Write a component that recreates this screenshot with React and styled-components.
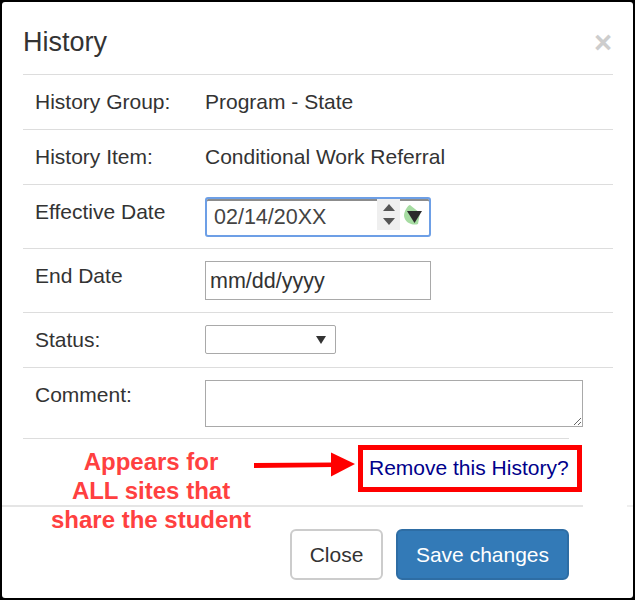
import React from "react";
import styled, { createGlobalStyle } from "styled-components";

const GlobalStyle = createGlobalStyle`
  html, body {
    margin: 0;
    padding: 0;
    background: #000;
  }
  body {
    font-family: "Liberation Sans", Arial, sans-serif;
    color: #333;
  }
`;

const Frame = styled.div`
  box-sizing: border-box;
  width: 635px;
  height: 600px;
  padding: 2px;
  background: #000;
`;

const Sheet = styled.div`
  height: 596px;
  background: #fff;
  border-radius: 3px;
  overflow: hidden;
`;

const Header = styled.div`
  display: flex;
  justify-content: space-between;
  align-items: center;
  box-sizing: border-box;
  height: 72px;
  padding: 9px 21px 0 21px;
`;

const Title = styled.h4`
  margin: 0;
  font-size: 27px;
  font-weight: 400;
  line-height: 63px;
  height: 63px;
`;

const CloseX = styled.span`
  font-size: 31px;
  font-weight: 700;
  line-height: 1;
  color: #cdcdcd;
`;

const Rows = styled.div`
  margin-left: 21px;
  width: 590px;
`;

const Row = styled.div`
  display: grid;
  grid-template-columns: 170px 1fr;
  box-sizing: border-box;
  min-height: ${(p) => p.$height}px;
  padding: 12px 0 11px 12px;
  border-top: 1px solid #ddd;
  font-size: 21px;
  line-height: 30px;
`;

const Label = styled.div`
  color: #333;
`;

const Value = styled.div`
  color: #333;
`;

const ShortRule = styled.div`
  margin-left: 21px;
  width: 546px;
  height: 1px;
  background: #ddd;
`;

const Field = styled.div`
  box-sizing: border-box;
  display: flex;
  align-items: center;
  width: 226px;
  height: 39px;
  padding-left: 4px;
  border: 1px solid #a9a9a9;
  font-size: 21.5px;
  color: #333;
`;

const FocusedField = styled(Field)`
  height: 40px;
  padding-left: 7px;
  border: 2px solid #6d9fe6;
  border-radius: 3px;
  box-shadow: inset 0 2px 0 #8c8c8c;
  color: #444;
`;

const FieldText = styled.span`
  flex: 1;
`;

const Spinner = styled.div`
  display: flex;
  flex-direction: column;
  justify-content: center;
  align-items: center;
  align-self: flex-start;
  gap: 7px;
  width: 23px;
  height: 31px;
  margin-right: 3px;
  background: #efefef;
`;

const Triangle = styled.i`
  display: block;
  width: 0;
  height: 0;
  border-left: ${(p) => p.$size}px solid transparent;
  border-right: ${(p) => p.$size}px solid transparent;
  ${(p) => (p.$up ? "border-bottom" : "border-top")}: ${(p) => p.$tall}px solid ${(p) => p.$color};
`;

const PickerIcon = styled.svg`
  display: block;
  width: 20px;
  height: 22px;
  margin: 0 6px 4px 0;
`;

const SelectBox = styled.div`
  box-sizing: border-box;
  display: flex;
  justify-content: flex-end;
  align-items: center;
  width: 131px;
  height: 29px;
  padding-right: 9px;
  border: 1px solid #a9a9a9;
  border-radius: 2px;
  background: #fff;
`;

const Comment = styled.textarea`
  display: block;
  box-sizing: border-box;
  width: 378px;
  height: 47px;
  margin: 0;
  padding: 2px;
  border: 1px solid #a9a9a9;
  border-radius: 0;
  outline: none;
  font: inherit;
`;

const RemoveRow = styled.div`
  position: relative;
  display: flex;
  justify-content: flex-end;
  box-sizing: border-box;
  height: 66px;
  padding: 6px 51px 0 0;
`;

const Callout = styled.div`
  box-sizing: border-box;
  display: flex;
  align-items: center;
  justify-content: flex-start;
  width: 224px;
  height: 47px;
  padding: 0 0 1px 6px;
  border: 5px solid #f00;
`;

const RemoveLink = styled.a`
  font-size: 21px;
  color: #00008b;
  text-decoration: none;
  white-space: nowrap;
`;

const Note = styled.div`
  position: absolute;
  z-index: 2;
  left: 29px;
  top: 8px;
  width: 240px;
  text-align: center;
  font-size: 24px;
  font-weight: 700;
  line-height: 29px;
  color: #ff4040;
`;

const Arrow = styled.svg`
  position: absolute;
  left: 250px;
  top: 10px;
  width: 108px;
  height: 30px;
`;

const FooterRule = styled.div`
  height: 2px;
  background: linear-gradient(to right, #e5e5e5 581px, #fff 581px, #fff 625px, #efefef 625px);
`;

const Footer = styled.div`
  display: flex;
  justify-content: flex-end;
  gap: 13px;
  padding: 22px 64px 0 0;
`;

const Button = styled.button`
  box-sizing: border-box;
  width: ${(p) => p.$width}px;
  height: 51px;
  margin: 0;
  padding: 0;
  border: 2px solid ${(p) => (p.$primary ? "#2e6da4" : "#ccc")};
  border-radius: 6px;
  background: ${(p) => (p.$primary ? "#337ab7" : "#fff")};
  color: ${(p) => (p.$primary ? "#fff" : "#333")};
  font-family: inherit;
  font-size: 21px;
`;

const App = () => {
  return (
    <>
      <GlobalStyle />
      <Frame>
        <Sheet>
          <Header>
            <Title>History</Title>
            <CloseX>×</CloseX>
          </Header>
          <Rows>
            <Row $height={55}>
              <Label>History Group:</Label>
              <Value>Program - State</Value>
            </Row>
            <Row $height={55}>
              <Label>History Item:</Label>
              <Value>Conditional Work Referral</Value>
            </Row>
            <Row $height={64}>
              <Label>Effective Date</Label>
              <FocusedField>
                <FieldText>02/14/20XX</FieldText>
                <Spinner>
                  <Triangle $up $size={6} $tall={7} $color="#555" />
                  <Triangle $size={6} $tall={7} $color="#555" />
                </Spinner>
                <PickerIcon viewBox="0 0 20 22">
                  <path d="M1 12 C1 7 5 1 7 1 C10 4 14 6 17 9 L15 20 C10 22 2 19 1 12 Z" fill="#a6dca2" />
                  <path d="M4 7 H19 L11.5 19 Z" fill="#2b2b2b" />
                </PickerIcon>
              </FocusedField>
            </Row>
            <Row $height={64}>
              <Label>End Date</Label>
              <Field>mm/dd/yyyy</Field>
            </Row>
            <Row $height={55}>
              <Label>Status:</Label>
              <SelectBox>
                <Triangle $size={5} $tall={8} $color="#333" />
              </SelectBox>
            </Row>
            <Row $height={70}>
              <Label>Comment:</Label>
              <Comment />
            </Row>
          </Rows>
          <ShortRule />
          <RemoveRow>
            <Note>
              Appears for
              <br />
              ALL sites that
              <br />
              share the student
            </Note>
            <Arrow viewBox="0 0 108 30">
              <path d="M2 14 L82 13.5 V18 L2 19 Z" fill="#f00" />
              <path d="M79 3.5 L103 15 L79 27.5 Z" fill="#f00" />
            </Arrow>
            <Callout>
              <RemoveLink href="#">Remove this History?</RemoveLink>
            </Callout>
          </RemoveRow>
          <FooterRule />
          <Footer>
            <Button $width={93}>Close</Button>
            <Button $width={173} $primary>
              Save changes
            </Button>
          </Footer>
        </Sheet>
      </Frame>
    </>
  );
};

export default App;
